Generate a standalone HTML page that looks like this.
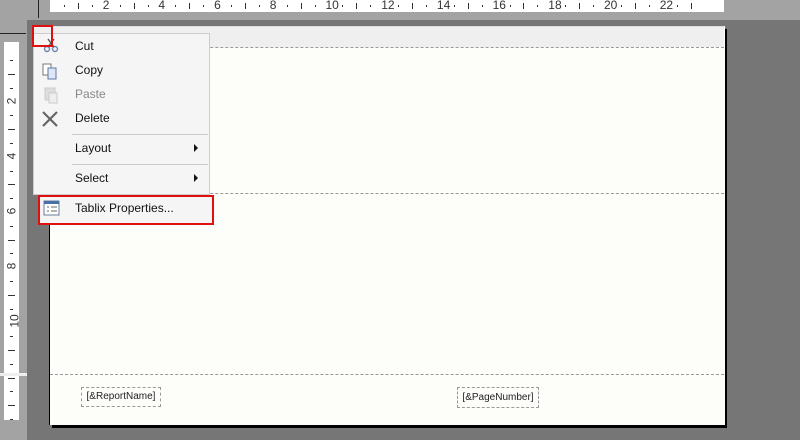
<!DOCTYPE html><html><head><style>
body{margin:0;width:800px;height:440px;overflow:hidden;background:#767676;font-family:"Liberation Sans",sans-serif;position:relative}
.a{position:absolute}
.rn{position:absolute;font-size:12px;color:#333;top:-2px}
.tk{position:absolute;background:#333;width:1px}
.lt{position:absolute;background:#333;height:1px}
.ln{position:absolute;font-size:12px;color:#333;transform:rotate(-90deg);left:4px}
.mi{position:absolute;left:75px;font-size:12px;color:#111}
</style></head><body>
<div class="a" style="left:0;top:0;width:800px;height:20px;background:#a3a3a3"></div>
<div class="a" style="left:0;top:0;width:27px;height:440px;background:#a3a3a3"></div>
<div class="a" style="left:38px;top:0;width:1px;height:18px;background:#222"></div>
<div class="a" style="left:0;top:33px;width:26px;height:1px;background:#222"></div>
<div class="a" style="left:50px;top:0;width:674px;height:12px;background:#fff" id="tr"></div>
<div class="a" style="left:4px;top:42px;width:15px;height:378px;background:#fff;overflow:hidden" id="lr"></div>
<div class="a" style="left:0;top:373px;width:27px;height:3px;background:#eee"></div>
<!-- page -->
<div class="a" style="left:52px;top:29px;width:675px;height:399px;background:#000"></div>
<div class="a" style="left:49px;top:26px;width:675px;height:399px;background:#fdfdfa;border-left:1px solid #000"></div>
<div class="a" style="left:33px;top:26px;width:691px;height:20px;background:#efefef;border-top:1px solid #ddd"></div>
<div class="a" style="left:50px;top:47px;width:674px;border-top:1px dashed #999"></div>
<div class="a" style="left:50px;top:193px;width:674px;border-top:1px dashed #999"></div>
<div class="a" style="left:50px;top:374px;width:674px;border-top:1px dashed #999"></div>
<div class="a" style="left:81px;top:387px;width:78px;height:18px;border:1px dashed #999;font-size:10px;line-height:18px;text-align:center;color:#222">[&amp;ReportName]</div>
<div class="a" style="left:457px;top:387px;width:80px;height:19px;border:1px dashed #999;font-size:10px;line-height:19px;text-align:center;color:#222">[&amp;PageNumber]</div>
<!-- menu -->
<div class="a" style="left:33px;top:33px;width:175px;height:160px;background:#f5f5f5;border:1px solid #ccc"></div>
<div class="a" style="left:72px;top:134px;width:136px;height:1px;background:#ccc"></div>
<div class="a" style="left:72px;top:164px;width:136px;height:1px;background:#ccc"></div>
<div class="mi" style="top:39px">Cut</div>
<div class="mi" style="top:63px">Copy</div>
<div class="mi" style="top:87px;color:#888">Paste</div>
<div class="mi" style="top:111px">Delete</div>
<div class="mi" style="top:141px">Layout</div>
<div class="mi" style="top:171px">Select</div>
<div class="a" style="left:194px;top:144px;border-left:4px solid #111;border-top:4px solid transparent;border-bottom:4px solid transparent"></div>
<div class="a" style="left:194px;top:174px;border-left:4px solid #111;border-top:4px solid transparent;border-bottom:4px solid transparent"></div>
<svg class="a" style="left:40px;top:36px" width="24" height="110">
<g stroke="#6b86b0" fill="none" stroke-width="1.4"><circle cx="7" cy="13" r="2.5"/><circle cx="15" cy="13" r="2.5"/><path d="M8 11 L14 3 M14 11 L8 3" stroke="#555"/></g>
<rect x="3" y="28" width="8" height="11" fill="#fff" stroke="#777"/><rect x="8" y="32" width="8" height="11" fill="#dde6f2" stroke="#5a79a8"/>
<rect x="5" y="52" width="10" height="12" fill="#ddd" stroke="#ccc"/><rect x="9" y="57" width="8" height="10" fill="#eee" stroke="#ccc"/>
<path d="M3 76 L17 90 M17 76 L3 90" stroke="#666" stroke-width="2.2"/>
</svg>
<div class="a" style="left:38px;top:195px;width:172px;height:26px;background:#f5f5f5;border:2px solid #e01010"></div>
<svg class="a" style="left:43px;top:200px" width="18" height="16"><rect x="1" y="1" width="15" height="14" fill="#fff" stroke="#6a7d99"/><rect x="1" y="1" width="15" height="3" fill="#4a6fa8"/><path d="M4 7h2M8 7h6M4 11h2M8 11h6" stroke="#666"/></svg>
<div class="mi" style="top:201px">Tablix Properties...</div>
<div class="a" style="left:32px;top:25px;width:17px;height:18px;border:2px solid #e01010"></div>
<script>
var tr=document.getElementById('tr'),s='';
for(var i=1;i<24;i++){var x=50+i*27.85-50;if(i%2==0){s+='<div class="rn" style="left:'+(x-3)+'px">'+i+'</div>'}else{s+='<div class="tk" style="left:'+x+'px;top:3px;height:6px"></div>'}
s+='<div class="tk" style="left:'+(x-13.9)+'px;top:5px;height:2px"></div>';}
tr.innerHTML=s;
var lr=document.getElementById('lr');s='';
for(var i=0;i<14;i++){var yy=i*27.6+32;if(i%2==1&&i<10){s+='<div class="ln" style="top:'+(yy-8)+'px">'+(i+1)+'</div>'}else{s+='<div class="lt" style="top:'+yy+'px;left:4px;width:7px"></div>'}
s+='<div class="lt" style="top:'+(yy-13.8)+'px;left:6px;width:3px"></div>';}
lr.innerHTML=s;
</script>
</body></html>
